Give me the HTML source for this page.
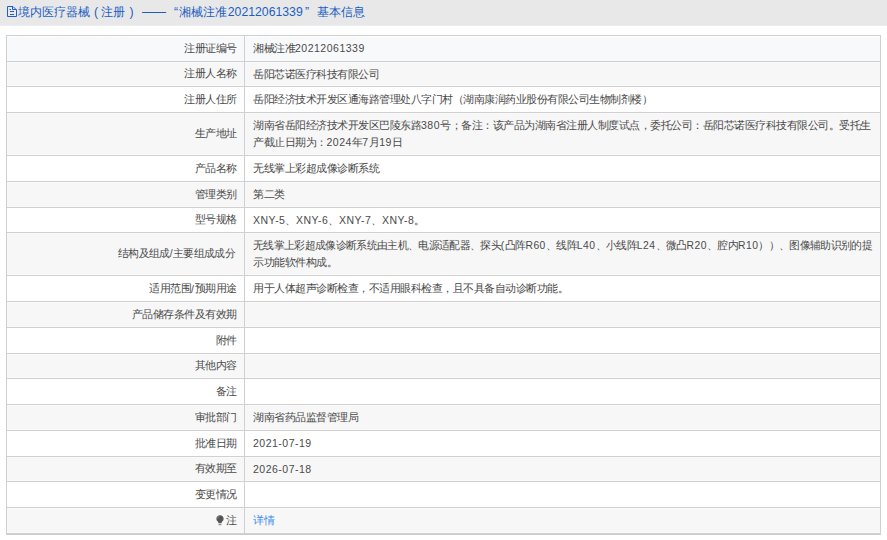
<!DOCTYPE html><html><head><meta charset="utf-8"><style>
*{margin:0;padding:0;box-sizing:border-box}
html,body{width:887px;height:540px;overflow:hidden;background:#fff;font-family:"Liberation Sans",sans-serif}
.hd{position:absolute;left:0;top:0;width:887px;height:25px;background:#e8e8e8;box-shadow:0 1px #eceef3;color:#1b5ec2;font-size:12.25px;line-height:23px;white-space:nowrap}
.hd .t{position:absolute;left:18px;top:0.7px}
.hd svg{position:absolute;left:7px;top:6px}
.row{position:absolute;left:6px;width:875px;}
.ln{position:absolute;left:6px;width:875px;height:1px;background:#d0d0d0}
.vl{position:absolute;top:35px;width:1px;background:#d0d0d0}
.lb{position:absolute;left:0;width:238px;text-align:right;padding-right:7.5px;color:#4a4a4a;font-size:10.5px;white-space:nowrap;display:flex;align-items:center;justify-content:flex-end}
.vv{position:absolute;left:239px;width:636px;padding-left:8px;padding-right:4px;color:#4a4a4a;font-size:10.5px;line-height:16.6px;display:flex;align-items:center}
.lk{color:#3a8cf0}
.c{letter-spacing:-0.5px}
.a{letter-spacing:0.5px}
.vv{white-space:nowrap}
.l{display:inline-block;transform-origin:0 0}
</style></head><body>
<div class="hd"><svg width="12" height="14" viewBox="0 0 12 14" style="left:6px;top:4px"><path d="M1.5 2.5H7L10.5 6V12.5H1.5Z" fill="none" stroke="#1f5fc8" stroke-width="1"/><path d="M6.5 2.5V5.5H10.5M3.5 5.5H5M4 7.5H8M4 10.5H8" fill="none" stroke="#1f5fc8" stroke-width="1"/></svg><span class="t" style="left:17.5px">境内医疗器械</span><span class="t" style="left:94px">(</span><span class="t" style="left:101px">注册</span><span class="t" style="left:129.5px">)</span><span class="t" style="left:142px;letter-spacing:-0.5px">——</span><span class="t" style="left:174px">“</span><span class="t" style="left:178.5px">湘械注准</span><span class="t" style="left:227.8px">20212061339</span><span class="t" style="left:305px">”</span><span class="t" style="left:316.8px">基本信息</span></div>

<div class="row" style="top:36px;height:25px;background:#f8f9fb;box-shadow:inset 0 1px #fcfcfd;">
<div class="lb" style="top:0;height:25px"><span class="c">注册证编号</span></div>
<div class="vv" style="top:0;height:25px"><div><span class="c">湘械注准</span><span class="a">20212061339</span></div></div>
</div>
<div class="row" style="top:62px;height:24px;background:#f7f7f7;box-shadow:inset 0 1px #fafafa,inset 0 -1px #fafafa;">
<div class="lb" style="top:0;height:24px"><span class="c">注册人名称</span></div>
<div class="vv" style="top:0;height:24px"><div><span class="c">岳阳芯诺医疗科技有限公司</span></div></div>
</div>
<div class="row" style="top:87px;height:25px;background:#ffffff;">
<div class="lb" style="top:0;height:25px"><span class="c">注册人住所</span></div>
<div class="vv" style="top:0;height:25px"><div><span class="c">岳阳经济技术开发区通海路管理处八字门村（湖南康润药业股份有限公司生物制剂楼）</span></div></div>
</div>
<div class="row" style="top:113px;height:42px;background:#f7f7f7;box-shadow:inset 0 1px #fafafa,inset 0 -1px #fafafa;">
<div class="lb" style="top:0;height:42px"><span class="c">生产地址</span></div>
<div class="vv" style="top:0;height:42px"><div><span class="c">湖南省岳阳经济技术开发区巴陵东路</span><span class="a">380</span><span class="c">号；备注：该产品为湖南省注册人制度试点，委托公司：岳阳芯诺医疗科技有限公司。受托生</span><br><span class="c">产截止日期为：</span><span class="a">2024</span><span class="c">年</span><span class="a">7</span><span class="c">月</span><span class="a">19</span><span class="c">日</span></div></div>
</div>
<div class="row" style="top:156px;height:25px;background:#ffffff;">
<div class="lb" style="top:0;height:25px"><span class="c">产品名称</span></div>
<div class="vv" style="top:0;height:25px"><div><span class="c">无线掌上彩超成像诊断系统</span></div></div>
</div>
<div class="row" style="top:182px;height:25px;background:#f7f7f7;box-shadow:inset 0 1px #fafafa,inset 0 -1px #fafafa;">
<div class="lb" style="top:0;height:25px"><span class="c">管理类别</span></div>
<div class="vv" style="top:0;height:25px"><div><span class="c">第二类</span></div></div>
</div>
<div class="row" style="top:208px;height:24px;background:#ffffff;">
<div class="lb" style="top:0;height:24px"><span class="c">型号规格</span></div>
<div class="vv" style="top:0;height:24px"><div><span class="a">XNY-5</span><span class="c">、</span><span class="a">XNY-6</span><span class="c">、</span><span class="a">XNY-7</span><span class="c">、</span><span class="a">XNY-8</span><span class="c">。</span></div></div>
</div>
<div class="row" style="top:233px;height:42px;background:#f7f7f7;box-shadow:inset 0 1px #fafafa,inset 0 -1px #fafafa;">
<div class="lb" style="top:0;height:42px"><span class="l" style="transform:scaleX(0.9835)"><span class="c">结构及组成</span><span class="a">/</span><span class="c">主要组成成分</span></span></div>
<div class="vv" style="top:0;height:42px"><div><span class="l" style="transform:scaleX(0.9835)"><span class="c">无线掌上彩超成像诊断系统由主机、电源适配器、探头</span><span class="a">(</span><span class="c">凸阵</span><span class="a">R60</span><span class="c">、线阵</span><span class="a">L40</span><span class="c">、小线阵</span><span class="a">L24</span><span class="c">、微凸</span><span class="a">R20</span><span class="c">、腔内</span><span class="a">R10</span><span class="c">））、图像辅助识别的提</span></span><br><span class="c">示功能软件构成。</span></div></div>
</div>
<div class="row" style="top:276px;height:25px;background:#ffffff;">
<div class="lb" style="top:0;height:25px"><span class="c">适用范围</span><span class="a">/</span><span class="c">预期用途</span></div>
<div class="vv" style="top:0;height:25px"><div><span class="c">用于人体超声诊断检查，不适用眼科检查，且不具备自动诊断功能。</span></div></div>
</div>
<div class="row" style="top:302px;height:25px;background:#f7f7f7;box-shadow:inset 0 1px #fafafa,inset 0 -1px #fafafa;">
<div class="lb" style="top:0;height:25px"><span class="c">产品储存条件及有效期</span></div>
<div class="vv" style="top:0;height:25px"><div></div></div>
</div>
<div class="row" style="top:328px;height:25px;background:#ffffff;">
<div class="lb" style="top:0;height:25px"><span class="c">附件</span></div>
<div class="vv" style="top:0;height:25px"><div></div></div>
</div>
<div class="row" style="top:354px;height:24px;background:#f7f7f7;box-shadow:inset 0 1px #fafafa,inset 0 -1px #fafafa;">
<div class="lb" style="top:0;height:24px"><span class="c">其他内容</span></div>
<div class="vv" style="top:0;height:24px"><div></div></div>
</div>
<div class="row" style="top:379px;height:25px;background:#ffffff;">
<div class="lb" style="top:0;height:25px"><span class="c">备注</span></div>
<div class="vv" style="top:0;height:25px"><div></div></div>
</div>
<div class="row" style="top:405px;height:25px;background:#f7f7f7;box-shadow:inset 0 1px #fafafa,inset 0 -1px #fafafa;">
<div class="lb" style="top:0;height:25px"><span class="c">审批部门</span></div>
<div class="vv" style="top:0;height:25px"><div><span class="c">湖南省药品监督管理局</span></div></div>
</div>
<div class="row" style="top:431px;height:25px;background:#ffffff;">
<div class="lb" style="top:0;height:25px"><span class="c">批准日期</span></div>
<div class="vv" style="top:0;height:25px"><div><span class="a">2021-07-19</span></div></div>
</div>
<div class="row" style="top:457px;height:24px;background:#f7f7f7;box-shadow:inset 0 1px #fafafa,inset 0 -1px #fafafa;">
<div class="lb" style="top:0;height:24px"><span class="c">有效期至</span></div>
<div class="vv" style="top:0;height:24px"><div><span class="a">2026-07-18</span></div></div>
</div>
<div class="row" style="top:482px;height:25px;background:#ffffff;">
<div class="lb" style="top:0;height:25px"><span class="c">变更情况</span></div>
<div class="vv" style="top:0;height:25px"><div></div></div>
</div>
<div class="row" style="top:508px;height:25px;background:#f7f7f7;box-shadow:inset 0 1px #fafafa,inset 0 -1px #fafafa;">
<div class="lb" style="top:0;height:25px"><svg width="8" height="11" viewBox="0 0 8 11" style="vertical-align:-1.5px;margin-right:1.5px"><path d="M4 0.3C1.9 0.3 0.4 1.8 0.4 3.7c0 1.3 0.7 2.2 1.4 2.9 0.4 0.4 0.6 0.9 0.6 1.4h3.2c0-0.5 0.2-1 0.6-1.4 0.7-0.7 1.4-1.6 1.4-2.9 0-1.9-1.5-3.4-3.6-3.4z" fill="#555"/><path d="M1.6 3.4C1.7 2.3 2.4 1.5 3.3 1.3" stroke="#9ab" stroke-width="0.7" fill="none"/><rect x="2.6" y="8.6" width="2.8" height="1.6" fill="#8a8a8a"/></svg>注</div>
<div class="vv" style="top:0;height:25px"><span class="lk c">详情</span></div>
</div>
<div class="ln" style="top:35px"></div>
<div class="ln" style="top:61px"></div>
<div class="ln" style="top:86px"></div>
<div class="ln" style="top:112px"></div>
<div class="ln" style="top:155px"></div>
<div class="ln" style="top:181px"></div>
<div class="ln" style="top:207px"></div>
<div class="ln" style="top:232px"></div>
<div class="ln" style="top:275px"></div>
<div class="ln" style="top:301px"></div>
<div class="ln" style="top:327px"></div>
<div class="ln" style="top:353px"></div>
<div class="ln" style="top:378px"></div>
<div class="ln" style="top:404px"></div>
<div class="ln" style="top:430px"></div>
<div class="ln" style="top:456px"></div>
<div class="ln" style="top:481px"></div>
<div class="ln" style="top:507px"></div>
<div class="ln" style="top:533px"></div>
<div class="ln" style="top:534px;background:#cccccc"></div>
<div class="vl" style="left:6px;height:500px"></div>
<div class="vl" style="left:244px;height:500px"></div>
<div class="vl" style="left:880px;height:500px"></div>
</body></html>
